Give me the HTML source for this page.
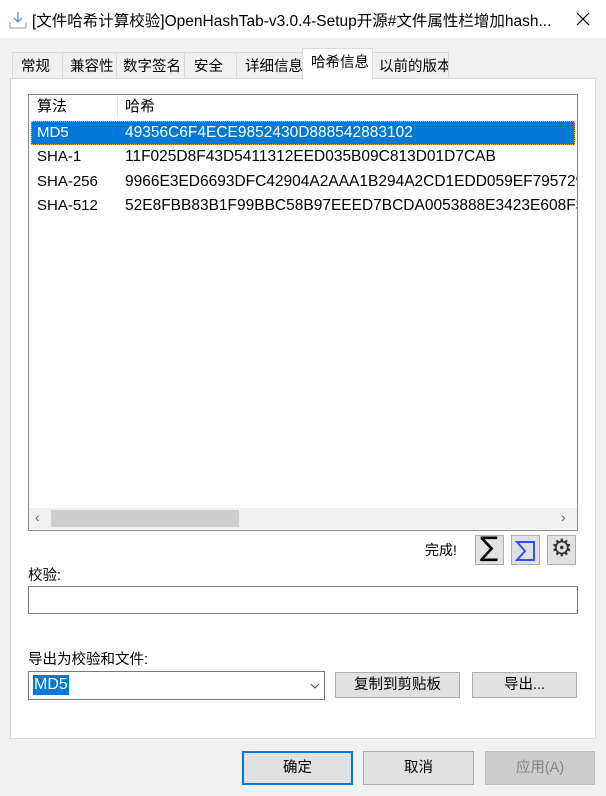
<html><head><style>
body{margin:0;width:606px;height:796px;background:#f0f0f0;font-family:"Liberation Sans","Noto Sans CJK SC",sans-serif;font-size:14px;color:#000;position:relative;overflow:hidden}
.a{position:absolute}
.tab{position:absolute;top:52px;height:26px;border:1px solid #d9d9d9;border-bottom:none;background:#f0f0f0;box-sizing:border-box;line-height:28px;padding-left:8px;font-size:14.5px;white-space:nowrap;overflow:hidden}
.btn{position:absolute;background:#e1e1e1;border:1px solid #adadad;box-sizing:border-box;text-align:center;font-size:14.5px}
.sb{position:absolute;top:535px;width:29px;height:30px;background:#e1e1e1;border:1px solid #adadad;box-sizing:border-box}
.row{position:absolute;left:2px;width:544px;height:24px;line-height:24px;font-size:15px}
.row span{position:absolute;left:6px}
.row b{font-weight:normal;position:absolute;left:94px;white-space:nowrap;font-size:15.5px}
</style></head><body>
<div class="a" style="left:0;top:0;width:606px;height:38px;background:#fff"></div>
<svg class="a" style="left:8px;top:10px" width="20" height="20"><path d="M10 2v10M6 8l4 4 4-4" stroke="#5b8fc7" fill="none" stroke-width="1.3"/><path d="M2 12v6h16v-6" stroke="#999" fill="none"/></svg>
<div class="a" style="left:32px;top:9px;font-size:15.5px;white-space:nowrap">[文件哈希计算校验]OpenHashTab-v3.0.4-Setup开源#文件属性栏增加hash...</div>
<svg class="a" style="left:576px;top:12px" width="14" height="14"><path d="M1 1l12 12M13 1L1 13" stroke="#000" stroke-width="1.2"/></svg>
<div class="tab" style="left:12px;width:51px">常规</div>
<div class="tab" style="left:62px;width:55px;padding-left:7px">兼容性</div>
<div class="tab" style="left:116px;width:69px;padding-left:6px">数字签名</div>
<div class="tab" style="left:184px;width:53px;padding-left:9px">安全</div>
<div class="tab" style="left:236px;width:67px;padding-left:8px">详细信息</div>
<div class="a" style="left:10px;top:78px;width:586px;height:661px;background:#fff;border:1px solid #d9d9d9;box-sizing:border-box"></div>
<div class="tab" style="left:302px;top:48px;width:71px;height:31px;background:#fff;line-height:28px;padding-left:8px">哈希信息</div>
<div class="tab" style="left:372px;width:77px;padding-left:6px">以前的版本</div>
<div class="a" style="left:28px;top:94px;width:550px;height:437px;border:1px solid #828790;box-sizing:border-box;background:#fff;overflow:hidden">
<div class="a" style="left:88px;top:1px;width:1px;height:22px;background:#e5e5e5"></div>
<div class="row" style="top:0"><span>算法</span><b style="font-size:15px">哈希</b></div>
<div class="row" style="top:26px;background:#0078d7;color:#fff;border:1px dotted #f0a040;box-sizing:border-box;line-height:22px"><span style="left:5px">MD5</span><b style="left:93px">49356C6F4ECE9852430D888542883102</b></div>
<div class="row" style="top:50px"><span>SHA-1</span><b>11F025D8F43D5411312EED035B09C813D01D7CAB</b></div>
<div class="row" style="top:75px"><span>SHA-256</span><b>9966E3ED6693DFC42904A2AAA1B294A2CD1EDD059EF795729A7C</b></div>
<div class="row" style="top:99px"><span>SHA-512</span><b>52E8FBB83B1F99BBC58B97EEED7BCDA0053888E3423E608F3E01</b></div>
<div class="a" style="left:0;top:413px;width:548px;height:21px;background:#f0f0f0"></div>
<div class="a" style="left:22px;top:415px;width:188px;height:17px;background:#cdcdcd"></div>
<div class="a" style="left:6px;top:414px;color:#606060;font-size:14px">‹</div>
<div class="a" style="left:532px;top:414px;color:#606060;font-size:14px">›</div>
</div>
<div class="a" style="left:425px;top:540px">完成!</div>
<div class="sb" style="left:475px"><div class="a" style="left:4px;top:-4px;font-size:27px;font-family:'DejaVu Sans'">∑</div></div>
<div class="sb" style="left:511px"><svg class="a" style="left:3px;top:4px" width="22" height="22"><path d="M2 2h17v18H2l8-9z" stroke="#3050ff" stroke-width="2" fill="none"/></svg></div>
<div class="sb" style="left:547px"><div class="a" style="left:3px;top:-2px;font-size:24px;color:#333">⚙</div></div>
<div class="a" style="left:28px;top:564px;font-size:14.5px">校验:</div>
<div class="a" style="left:28px;top:586px;width:550px;height:28px;border:1px solid #7a7a7a;box-sizing:border-box;background:#fff"></div>
<div class="a" style="left:28px;top:648px;font-size:14.5px">导出为校验和文件:</div>
<div class="a" style="left:28px;top:671px;width:297px;height:29px;border:1px solid #7a7a7a;box-sizing:border-box;background:#fff"><span class="a" style="left:4px;top:3px;background:#0078d7;color:#fff;font-size:16px;line-height:20px;padding:0 1px">MD5</span><svg class="a" style="left:281px;top:11px" width="10" height="6"><path d="M1 1l4 4 4-4" stroke="#444" fill="none"/></svg></div>
<div class="btn" style="left:335px;top:672px;width:125px;height:26px;line-height:24px">复制到剪贴板</div>
<div class="btn" style="left:472px;top:672px;width:105px;height:26px;line-height:24px">导出...</div>
<div class="btn" style="left:242px;top:751px;width:111px;height:34px;line-height:30px;border:2px solid #0078d7">确定</div>
<div class="btn" style="left:363px;top:751px;width:111px;height:34px;line-height:32px">取消</div>
<div class="btn" style="left:485px;top:751px;width:110px;height:34px;line-height:32px;background:#cccccc;border-color:#bfbfbf;color:#838383">应用(A)</div>
</body></html>
